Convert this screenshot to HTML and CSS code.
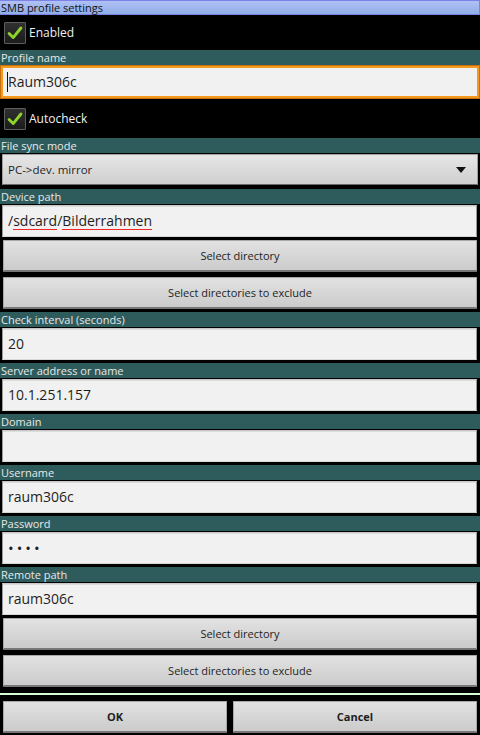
FILE: index.html
```html
<!DOCTYPE html>
<html>
<head>
<meta charset="utf-8">
<link rel="stylesheet" href="styles.css">
</head>
<body>
<div class="screen">
  <div class="title">SMB profile settings</div>

  <div class="check-row check-row-first">
    <span class="checkbox"><svg viewBox="0 0 22 22" width="22" height="22"><path d="M4.5 11.5 L9 16 L17.5 5.5" fill="none" stroke="#8fd22a" stroke-width="3.2" stroke-linecap="round" stroke-linejoin="round"/></svg></span>
    <span class="check-label">Enabled</span>
  </div>

  <div class="label">Profile name</div>
  <div class="input input-focus"><span class="cursor"></span>Raum306c</div>

  <div class="check-row check-row-second">
    <span class="checkbox"><svg viewBox="0 0 22 22" width="22" height="22"><path d="M4.5 11.5 L9 16 L17.5 5.5" fill="none" stroke="#8fd22a" stroke-width="3.2" stroke-linecap="round" stroke-linejoin="round"/></svg></span>
    <span class="check-label">Autocheck</span>
  </div>

  <div class="label">File sync mode</div>
  <div class="spinner">
    <span class="spinner-text">PC-&gt;dev. mirror</span>
    <span class="spinner-arrow"></span>
  </div>

  <div class="label label-gap">Device path</div>
  <div class="input">/<span class="spell">sdcard</span>/<span class="spell">Bilderrahmen</span></div>
  <div class="button-group">
    <div class="button">Select directory</div>
    <div class="button">Select directories to exclude</div>
  </div>

  <div class="label">Check interval (seconds)</div>
  <div class="input">20</div>

  <div class="label">Server address or name</div>
  <div class="input">10.1.251.157</div>

  <div class="label">Domain</div>
  <div class="input"></div>

  <div class="label">Username</div>
  <div class="input">raum306c</div>

  <div class="label">Password</div>
  <div class="input input-pass">&bull;&bull;&bull;&bull;</div>

  <div class="label">Remote path</div>
  <div class="input">raum306c</div>
  <div class="button-group">
    <div class="button">Select directory</div>
    <div class="button">Select directories to exclude</div>
  </div>

  <div class="divider"></div>

  <div class="actions">
    <div class="button action">OK</div>
    <div class="button action">Cancel</div>
  </div>
</div>
</body>
</html>
```

FILE: styles.css
```css
html, body {
  margin: 0;
  padding: 0;
  background: #000;
}

.screen {
  width: 480px;
  height: 735px;
  background: #000;
  display: flex;
  flex-direction: column;
  font-family: "Open Sans", "DejaVu Sans", sans-serif;
  overflow: hidden;
}

.title {
  height: 13px;
  line-height: 13px;
  font-size: 11px;
  color: #111;
  padding-left: 1px;
  background: linear-gradient(#b0c0f4, #90aee6);
  border: 1px solid #7a82e8;
  border-left: none;
}

.check-row {
  display: flex;
  align-items: center;
  gap: 3px;
  padding-left: 4px;
}

.check-row-first {
  height: 35px;
}

.check-row-second {
  height: 39px;
}

.checkbox {
  width: 20px;
  height: 20px;
  border: 1px solid #5e5e5e;
  border-radius: 1px;
  background: linear-gradient(#303030, #1c1c1c);
  display: flex;
  align-items: center;
  justify-content: center;
}

.checkbox svg {
  display: block;
}

.check-label {
  color: #f0f0f0;
  font-size: 12px;
}

.label {
  height: 15px;
  line-height: 15px;
  font-size: 11px;
  color: #e8e8e8;
  background: #2e5c5d;
  padding-left: 1px;
  margin-bottom: 1px;
}

.label-gap {
  margin-top: 4px;
}

.input {
  height: 30px;
  margin: 0 3px 3px 2px;
  background: #f1f1f1;
  border: 1px solid #9a9a9a;
  border-top-color: #c8c8c8;
  border-bottom-color: #d8d8d8;
  box-shadow: inset 0 1px 0 #dcdcdc;
  color: #1e1e1e;
  font-size: 14px;
  line-height: 30px;
  padding-left: 5px;
  white-space: nowrap;
}

.input-focus {
  margin: 0 1px 1px 1px;
  height: 28px;
  line-height: 28px;
  border: 2px solid #f39a1e;
  box-shadow: 0 0 0 1px #c87010;
  padding-left: 4px;
}

.cursor {
  display: inline-block;
  width: 1px;
  height: 20px;
  background: #111;
  vertical-align: middle;
  position: relative;
  top: -1px;
}

.input-pass {
  font-size: 15px;
  letter-spacing: 3px;
}

.spell {
  display: inline-block;
  line-height: 17px;
  border-bottom: 1px solid #f02828;
}

.spinner {
  height: 29px;
  margin: 0 2px;
  background: linear-gradient(#e6e6e6, #cfcfcf);
  border: 1px solid #a0a0a0;
  border-bottom: 1px solid #6a6a6a;
  display: flex;
  align-items: center;
  justify-content: space-between;
  padding: 0 11px 0 5px;
}

.spinner-text {
  font-size: 11.5px;
  color: #1e1e1e;
}

.spinner-arrow {
  width: 0;
  height: 0;
  border-left: 5px solid transparent;
  border-right: 5px solid transparent;
  border-top: 6px solid #111;
}

.button-group {
  display: flex;
  flex-direction: column;
  gap: 5px;
  margin-bottom: 3px;
}

.button {
  height: 29px;
  margin: 0 3px;
  background: linear-gradient(#e2e2e2, #cbcbcb);
  border: 1px solid #a8a8a8;
  border-bottom: 2px solid #777;
  border-radius: 1px;
  display: flex;
  align-items: center;
  justify-content: center;
  font-size: 11px;
  color: #1e1e1e;
}

.divider {
  margin-top: 3px;
  height: 2px;
  background: #d8fcd8;
}

.actions {
  display: grid;
  grid-template-columns: 224px 1fr;
  gap: 6px;
  padding: 0 3px;
  margin-top: 6px;
}

.action {
  margin: 0;
  font-weight: bold;
}
```
